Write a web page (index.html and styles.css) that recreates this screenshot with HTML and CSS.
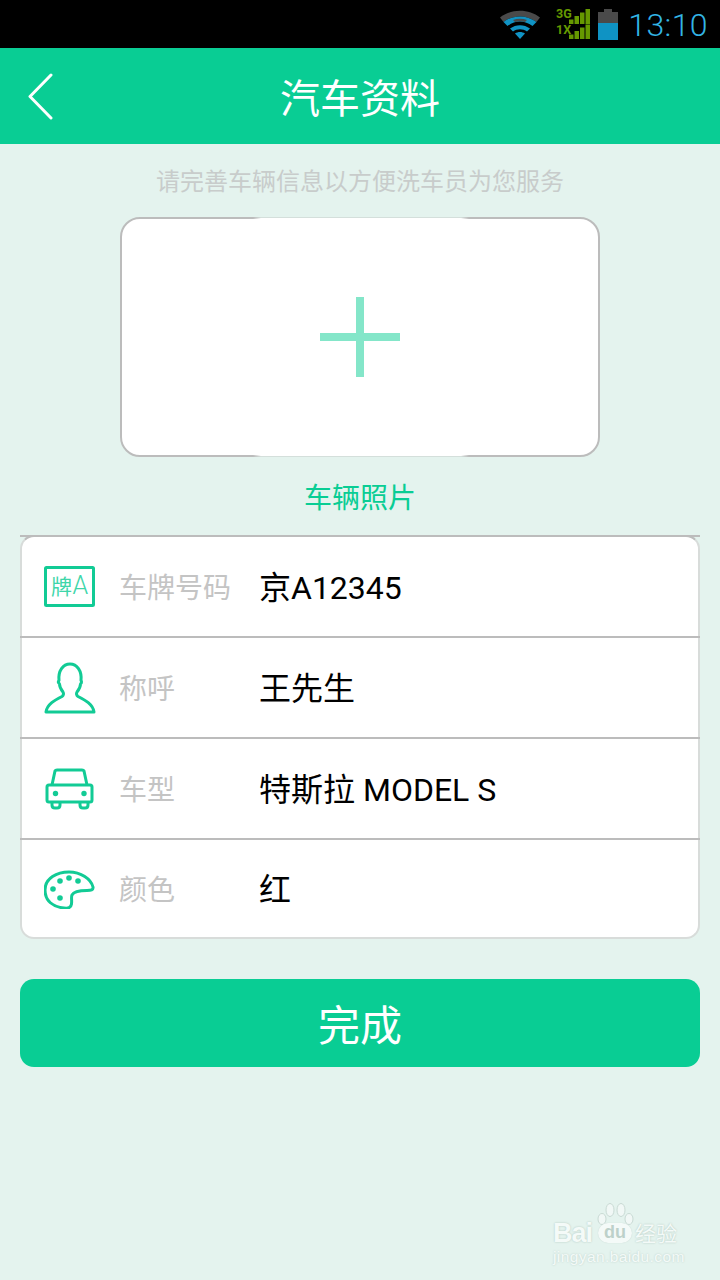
FILE: index.html
```html
<!DOCTYPE html>
<html lang="zh">
<head>
<meta charset="utf-8">
<title>汽车资料</title>
<link rel="stylesheet" href="styles.css">
</head>
<body>
<div class="screen">
  <div class="statusbar">
    <svg class="ic-wifi" width="40" height="32" viewBox="0 0 40 32">
      <path d="M0 9.5 C11 0.5 29 0.5 40 9.5 L36.5 14 C27 6.5 13 6.5 3.500 14Z" fill="#4a4a4a"/>
      <path d="M3.500 14 C13 6.500 27 6.500 36.500 14 L32.500 18 C24.500 12 15.500 12 7.500 18Z" fill="#1093c4"/>
      <path d="M13 12 Q20 9.500 27 12 L25 14 Q20 12.500 15 14Z" fill="#4a4a4a"/>
      <path d="M10 20.500 C16 16 24 16 30 20.500 L27 23.500 C23 20.500 17 20.500 13 23.500Z" fill="#1093c4"/>
      <path d="M15 25.500 C18 23.500 22 23.500 25 25.500 L20 31Z" fill="#1093c4"/>
    </svg>
    <div class="signal">
      <svg width="36" height="32" viewBox="0 0 36 32">
        <path d="M14 16h4.500v-4.500h-4.500zM19.500 16h4.500V8h-4.500zM25 16h4.500V4.500h-4.500zM30.500 16H35V1h-4.500z" fill="#669900"/>
        <path d="M14 31h4.500v-4.500h-4.500zM19.500 31h4.500v-8h-4.500zM25 31h4.500V19.500h-4.500zM30.500 31H35V16.500h-4.500z" fill="#669900"/>
        <text x="1" y="9.500" class="net">3G</text>
        <text x="1" y="25.500" class="net">1X</text>
      </svg>
    </div>
    <div class="battery"><div class="battery-cap"></div><div class="battery-body"><div class="battery-fill"></div></div></div>
    <div class="clock">13:10</div>
  </div>

  <header class="titlebar">
    <svg class="back" width="28" height="48" viewBox="0 0 28 48">
      <path d="M24 2 L3 23.500 L24 45" fill="none" stroke="#fff" stroke-width="3" stroke-linecap="round" stroke-linejoin="round"/>
    </svg>
    <h1 class="title">汽车资料</h1>
  </header>

  <main class="content">
    <p class="hint">请完善车辆信息以方便洗车员为您服务</p>
    <div class="photo">
      <div class="plus"><span class="plus-h"></span><span class="plus-v"></span></div>
    </div>
    <p class="photo-label">车辆照片</p>

    <div class="form">
      <div class="row">
        <div class="icon">
          <svg width="52" height="42" viewBox="0 0 52 42">
            <rect x="1.500" y="1.500" width="48" height="38" rx="1" fill="none" stroke="#12cb95" stroke-width="3"/>
            <text x="7" y="27.500" class="plate">牌</text>
            <text x="28.500" y="28" class="plate-a">A</text>
          </svg>
        </div>
        <span class="label">车牌号码</span><span class="value">京A12345</span>
      </div>
      <div class="row">
        <div class="icon">
          <svg width="52" height="52" viewBox="0 0 52 52">
            <path d="M2 50 H50 C49 42 41 38 34 34.500 C32.500 33.500 32 31.500 33 30 C35 27.500 36.500 25 36.500 22 C38 20.500 37.500 19 37 18.500 C38 9 33 2 26 2 C19 2 14 9 15 18.500 C14.500 19 14 20.500 15.500 22 C15.500 25 17 27.500 19 30 C20 31.500 19.500 33.500 18 34.500 C11 38 3 42 2 50Z" fill="none" stroke="#12cb95" stroke-width="3" stroke-linejoin="round"/>
          </svg>
        </div>
        <span class="label">称呼</span><span class="value">王先生</span>
      </div>
      <div class="row">
        <div class="icon">
          <svg width="52" height="44" viewBox="0 -1 52 44">
            <path d="M8 17 L11 3 Q11.500 2 13 2 H38 Q39.500 2 40 3 L43 17" fill="none" stroke="#12cb95" stroke-width="3"/>
            <rect x="3" y="17" width="45" height="17" rx="2" fill="none" stroke="#12cb95" stroke-width="3"/>
            <circle cx="11.500" cy="25.500" r="2.700" fill="#12cb95"/>
            <circle cx="40" cy="25.500" r="2.700" fill="#12cb95"/>
            <path d="M8 34 V37 Q8 40 11 40 H13 Q16 40 16 37 V34 M36 34 V37 Q36 40 39 40 H41 Q44 40 44 37 V34" fill="none" stroke="#12cb95" stroke-width="3"/>
          </svg>
        </div>
        <span class="label">车型</span><span class="value">特斯拉 MODEL S</span>
      </div>
      <div class="row">
        <div class="icon">
          <svg width="52" height="40" viewBox="1 -1 52 40">
            <path d="M2 20 C2 8 14 2 26 2 C38 2 48 9 50 17 C50.500 20 48 20.500 44 20.500 C38 20.500 31 21 29 25 C28 27 29 30 28.500 34 C28 38 25 38.500 21 38 C10 37 2 31 2 20Z" fill="none" stroke="#12cb95" stroke-width="3" stroke-linejoin="round"/>
            <circle cx="17" cy="11" r="2.800" fill="#12cb95"/>
            <circle cx="26" cy="8" r="2.800" fill="#12cb95"/>
            <circle cx="35" cy="11" r="2.800" fill="#12cb95"/>
            <circle cx="10" cy="19" r="2.800" fill="#12cb95"/>
            <circle cx="17" cy="28" r="2.800" fill="#12cb95"/>
          </svg>
        </div>
        <span class="label">颜色</span><span class="value">红</span>
      </div>
    </div>

    <button class="done">完成</button>
  </main>

  <div class="watermark">
    <span class="wm-bai">Bai</span>
    <svg class="wm-paw" width="40" height="30" viewBox="0 0 40 30">
      <ellipse cx="6" cy="18" rx="4" ry="5.500" fill="#f1f8f6" stroke="#c9dad4"/>
      <ellipse cx="14" cy="9" rx="4" ry="6.500" fill="#f1f8f6" stroke="#c9dad4"/>
      <ellipse cx="25" cy="9" rx="4" ry="6.500" fill="#f1f8f6" stroke="#c9dad4"/>
      <ellipse cx="33" cy="18" rx="4" ry="5.500" fill="#f1f8f6" stroke="#c9dad4"/>
    </svg>
    <span class="wm-du">du</span>
    <span class="wm-cn">经验</span>
    <span class="wm-url">jingyan.baidu.com</span>
  </div>
</div>
</body>
</html>
```

FILE: styles.css
```css
* { box-sizing: border-box; }
html, body { margin: 0; padding: 0; }
body { font-family: "Noto Sans CJK SC", "Noto Sans", sans-serif; background: #e4f3ee; }
.screen { position: relative; width: 720px; height: 1280px; overflow: hidden; background: #e4f3ee; }

.statusbar { height: 48px; background: #000; display: flex; align-items: center; justify-content: flex-end; padding-right: 12px; }
.ic-wifi { margin-right: 15px; display: block; }
.signal { margin-right: 7px; height: 32px; }
.signal svg { display: block; overflow: visible; }
.net { font: bold 12.5px "Roboto", sans-serif; fill: #669900; }
.battery { width: 20px; height: 31px; margin-right: 10px; display: flex; flex-direction: column; align-items: center; }
.battery-cap { width: 8px; height: 3px; background: #4a4a4a; }
.battery-body { width: 20px; flex: 1; background: #4a4a4a; display: flex; align-items: flex-end; }
.battery-fill { width: 100%; height: 17px; background: #0f93c4; }
.clock { font: 300 32px "Roboto", sans-serif; color: #33b5e5; letter-spacing: 0.4px; line-height: 48px; padding-top: 2px; }

.titlebar { position: relative; height: 96px; background: #09cd94; display: flex; align-items: center; justify-content: center; }
.back { position: absolute; left: 27px; top: 25px; }
.title { margin: 0; font-size: 40px; font-weight: 400; color: #fff; line-height: 96px; }

.content { padding: 0 20px; display: flex; flex-direction: column; align-items: center; }
.hint { margin: 18px 0 0; height: 36px; line-height: 36px; font-size: 24px; color: #c8cccb; text-align: center; }
.photo { position: relative; margin-top: 19px; width: 480px; height: 240px; background: #fff; border: 2px solid #bcbcbc; border-radius: 20px; display: flex; align-items: center; justify-content: center; }
.photo::before, .photo::after { content: ""; position: absolute; left: 131px; width: 216px; height: 2px; -webkit-mask-image: linear-gradient(90deg, transparent, #000 8px, #000 calc(100% - 8px), transparent); mask-image: linear-gradient(90deg, transparent, #000 8px, #000 calc(100% - 8px), transparent); }
.photo::before { top: -2px; background: linear-gradient(#d4dfdb 50%, #fff 50%); }
.photo::after { bottom: -2px; background: linear-gradient(#fff 50%, #d4dfdb 50%); }
.plus { position: relative; width: 80px; height: 80px; }
.plus-h { position: absolute; left: 0; top: 36px; width: 80px; height: 8px; background: #84e6c9; }
.plus-v { position: absolute; left: 36px; top: 0; width: 8px; height: 80px; background: #84e6c9; }
.photo-label { margin: 19px 0 0; height: 40px; line-height: 40px; font-size: 28px; color: #09cd94; }

.form { position: relative; width: 680px; margin-top: 19px; background: #fff; border: 2px solid #d8dcda; border-top: 2px solid #bcbcbc; border-radius: 14px; }
.form::before { content: ""; position: absolute; left: -2px; right: -2px; top: -2px; height: 2px; background: #bcbcbc; }
.row { height: 101px; display: flex; align-items: center; border-bottom: 2px solid #bcbcbc; margin: 0 -2px; padding: 0 2px; }
.row:last-child { border-bottom: 0; height: 97px; }
.icon { width: 98px; padding-left: 22px; display: flex; align-items: center; }
.icon svg { display: block; }
.label { width: 140px; font-size: 28px; color: #c4c4c4; padding-bottom: 2px; margin-left: -1px; }
.value { font-size: 32px; color: #000; font-family: "Roboto", "Noto Sans CJK SC", sans-serif; padding-bottom: 3px; }

.done { width: 680px; height: 88px; margin-top: 40px; border: 0; border-radius: 14px; background: #09cd94; color: #fff; font: 400 42px "Noto Sans CJK SC", sans-serif; padding: 0 0 2px; }

.plate { font: 400 21px "Noto Sans CJK SC", sans-serif; fill: #3ed6a9; }
.plate-a { font: 300 25px "Roboto", sans-serif; fill: #3ed6a9; }

.watermark { position: absolute; left: 553px; top: 1200px; width: 130px; height: 68px; }
.wm-bai { position: absolute; left: 0; top: 18px; font: bold 27px/30px "Liberation Sans", sans-serif; color: #f4faf8; letter-spacing: -1px; text-shadow: 0 0 2px #adc4bc; }
.wm-paw { position: absolute; left: 43px; top: 1px; }
.wm-du { position: absolute; left: 45px; top: 23px; width: 34px; height: 20px; border-radius: 10px; background: #f4faf8; font: bold 18px/18px "Liberation Sans", sans-serif; color: #bdd1ca; text-align: center; box-shadow: 0 0 1px #bdd1ca; }
.wm-cn { position: absolute; left: 82px; top: 17px; font-size: 21px; line-height: 30px; color: #f4faf8; text-shadow: 0 0 2px #adc4bc; }
.wm-url { position: absolute; left: 0; top: 49px; font: 15.5px/16px "Liberation Sans", sans-serif; color: #f4faf8; letter-spacing: .4px; white-space: nowrap; text-shadow: 0 0 2px #b8ccc5; }
```
